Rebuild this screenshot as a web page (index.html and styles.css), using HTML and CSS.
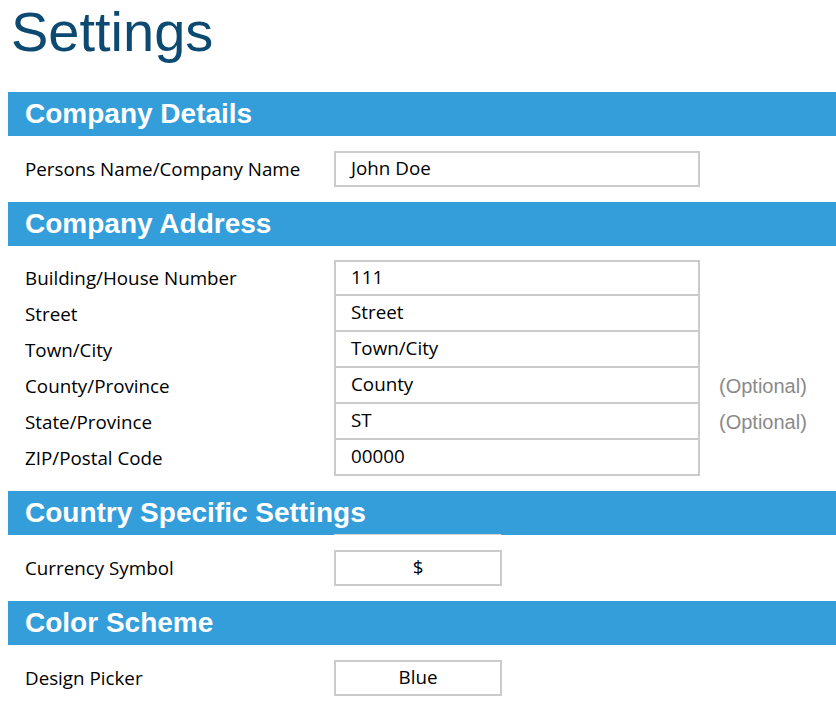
FILE: index.html
```html
<!DOCTYPE html>
<html>
<head>
  <meta http-equiv="Content-Type" content="text/html; charset=utf-8" />
  <title>Settings</title>
<link rel="stylesheet" href="styles.css">
</head>
<body>

<h1 class="title">Settings</h1>

<div class="bar">Company Details</div>
<div class="section">
  <div class="row">
    <div class="label">Persons Name/Company Name</div>
    <div class="cell cell-wide single">John Doe</div>
  </div>
</div>

<div class="bar">Company Address</div>
<div class="section stack">
  <div class="row">
    <div class="label">Building/House Number</div>
    <div class="cell cell-wide first">111</div>
  </div>
  <div class="row">
    <div class="label">Street</div>
    <div class="cell cell-wide">Street</div>
  </div>
  <div class="row">
    <div class="label">Town/City</div>
    <div class="cell cell-wide">Town/City</div>
  </div>
  <div class="row">
    <div class="label">County/Province</div>
    <div class="cell cell-wide">County</div>
    <div class="note">(Optional)</div>
  </div>
  <div class="row">
    <div class="label">State/Province</div>
    <div class="cell cell-wide">ST</div>
    <div class="note">(Optional)</div>
  </div>
  <div class="row">
    <div class="label">ZIP/Postal Code</div>
    <div class="cell cell-wide">00000</div>
  </div>
</div>

<div class="bar bar-rule">Country Specific Settings</div>
<div class="section">
  <div class="row">
    <div class="label">Currency Symbol</div>
    <div class="cell cell-small single">$</div>
  </div>
</div>

<div class="bar">Color Scheme</div>
<div class="section">
  <div class="row">
    <div class="label">Design Picker</div>
    <div class="cell cell-small single">Blue</div>
  </div>
</div>

</body>
</html>
```

FILE: styles.css
```css
body {
    margin: 0;
    background-color: #fff;
    font-family: "Open Sans", "Noto Sans", sans-serif;
    color: #000;
}

.title {
    margin: 0;
    height: 92px;
    padding-left: 11px;
    font-family: "Liberation Sans", Arial, sans-serif;
    font-weight: normal;
    font-size: 56px;
    line-height: 64px;
    color: #0c4a72;
}

.bar {
    margin-left: 8px;
    height: 44px;
    padding-left: 17px;
    background-color: #349edb;
    color: #fff;
    font-family: "Liberation Sans", Arial, sans-serif;
    font-weight: bold;
    font-size: 28px;
    line-height: 44px;
}
/* faint cell edge under the bar, as in the sheet */
.bar-rule {
    background-image: linear-gradient(#d4d4d4, #d4d4d4);
    background-size: 167px 1px;
    background-position: 326px 43px;
    background-repeat: no-repeat;
}

.section {
    padding: 15px 0 15px 25px;
}
.section.stack {
    padding-top: 14px;
}

.row {
    display: grid;
    grid-template-columns: 309px auto auto;
    align-items: center;
    justify-content: start;
}

.label {
    font-size: 18.8px;
    line-height: 36px;
}

.cell {
    box-sizing: border-box;
    height: 36px;
    padding-left: 15px;
    border: 2px solid #cbcbcb;
    border-top: 0;
    font-size: 18.8px;
    line-height: 33px;
}
.cell.first,
.cell.single {
    border-top: 2px solid #cbcbcb;
    line-height: 31px;
}
.cell-wide {
    width: 366px;
}
.cell-small {
    width: 168px;
    padding-left: 0;
    text-align: center;
}

.note {
    padding-left: 19px;
    font-family: "Liberation Sans", Arial, sans-serif;
    font-size: 20px;
    color: #8a8a8a;
}
```
